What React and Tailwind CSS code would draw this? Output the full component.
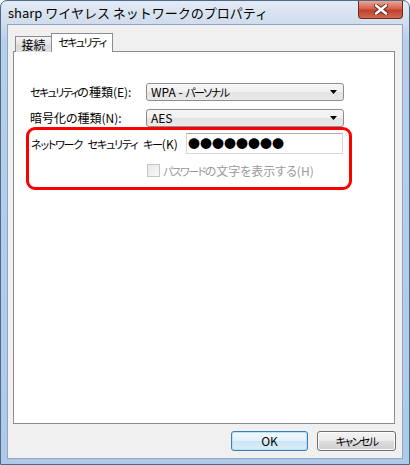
import React from "react";

const jp = "font-['Noto_Sans_CJK_JP','Noto_Sans',sans-serif] [font-feature-settings:'palt'] whitespace-nowrap";

function K({ children }) {
  return <span className="text-[11px] tracking-[-1.6px]">{children}</span>;
}

function K2({ children }) {
  return <span className="text-[11px] tracking-[-1.2px]">{children}</span>;
}

function Arrow() {
  return (
    <svg width="7" height="4" viewBox="0 0 7 4" className="block">
      <path d="M0 0H7L3.5 4Z" fill="#000" />
    </svg>
  );
}

function Combo({ children }) {
  return (
    <div className="w-[198px] h-[18px] flex items-center justify-between pl-[4px] pr-[6px] border border-[#8d8d8d] rounded-[3px] bg-[linear-gradient(#f7f7f7,#f0f0f0_50%,#e3e3e3_51%,#e9e9e9)] text-[12px] text-black leading-none">
      <span>{children}</span>
      <Arrow />
    </div>
  );
}

export default function App() {
  return (
    <div className={`${jp} w-[410px] h-[465px] flex flex-col rounded-t-[7px] border border-[#4d6a8c] bg-[linear-gradient(180deg,#e3ebf5_0px,#cfdcec_24px,#b9cfe8_40px,#aecae8_100%)] overflow-hidden`}>
      {/* title bar */}
      <div className="h-[23px] flex items-start justify-between pl-[7px] pr-[6px]">
        <div className="text-[13px] leading-none pt-[5px] text-black [font-feature-settings:normal]">sharp ワイヤレス ネットワークのプロパティ</div>
        <div className="w-[45px] h-[18px] flex items-center justify-center rounded-b-[4px] border border-t-0 border-[#6a2a22] bg-[linear-gradient(#e9a797,#d4604c_45%,#c0412c_55%,#d26a52)]">
          <svg width="14" height="11" viewBox="0 0 14 11">
            <path d="M2 1.5L12 9.5M12 1.5L2 9.5" stroke="#5a2018" strokeWidth="4.2" strokeLinecap="round" />
            <path d="M2 1.5L12 9.5M12 1.5L2 9.5" stroke="#ffffff" strokeWidth="2.6" strokeLinecap="round" />
          </svg>
        </div>
      </div>
      {/* client */}
      <div className="flex-1 mx-[6px] mb-[5px] flex flex-col border border-[#8fa6c4] bg-[#f0f0f0] pl-[5px] pr-[7px] pt-[8px]">
        {/* tabs */}
        <div className="flex items-end ml-[2px] -mb-px relative z-10 text-[12px] leading-none">
          <div className="w-[37px] h-[16px] flex items-center justify-center border border-b-0 border-[#898c95] bg-[linear-gradient(#f5f5f5,#e4e4e4_50%,#d9d9d9_51%,#e1e1e1)] text-black pt-[1px]">
            接続
          </div>
          <div className="w-[62px] h-[19px] -ml-px flex items-center justify-center border border-b-0 border-[#898c95] bg-white text-black pb-[1px]">
            <K>セキュリティ</K>
          </div>
        </div>
        {/* panel */}
        <div className="flex-1 bg-white border border-[#898c95] pt-[31px] pl-[12px] flex flex-col text-[12px] text-black">
          <div className="flex items-center h-[18px]">
            <div className="w-[116px] ml-[4px] leading-none"><K>セキュリティ</K>の種類(E):</div>
            <Combo>WPA - <K>パーソナル</K></Combo>
          </div>
          <div className="flex items-center h-[18px] mt-[8px]">
            <div className="w-[116px] ml-[4px] leading-none">暗号化の種類(N):</div>
            <Combo>AES</Combo>
          </div>
          <div className="w-[326px] h-[63px] border-[3px] border-[#ff0000] rounded-[9px] flex flex-col">
            <div className="flex items-center mt-[3px] pl-[2px]">
              <div className="w-[155px] leading-none"><K2>ネットワーク</K2><span className="ml-[3px]"> </span><K2>セキュリティ</K2><span className="ml-[3px]"> </span><K2>キー</K2>(K)</div>
              <div className="w-[157px] h-[21px] flex items-center pl-[1px] border border-[#d5d8de] border-t-[#abadb3] bg-white text-[12px] leading-none text-black [font-feature-settings:normal]">
                ●●●●●●●●
              </div>
            </div>
            <div className="flex items-center mt-[10px] pl-[118px]">
              <div className="w-[13px] h-[13px] border border-[#c5c5c5] bg-[linear-gradient(135deg,#e8e8e8,#f8f8f8)]" />
              <div className="ml-[3px] leading-none text-[#9a9a9a]"><K>パスワード</K>の文字を表示する(H)</div>
            </div>
          </div>
        </div>
        {/* buttons */}
        <div className="h-[20px] mt-[7px] mb-[7px] flex justify-end gap-[9px] text-[12px] leading-none text-black">
          <div className="w-[77px] h-[20px] flex items-center justify-center rounded-[3px] border border-[#3c7fb1] bg-[linear-gradient(#f2f9fd,#e3f1fa_50%,#cbe5f5_51%,#d9edf9)] shadow-[inset_0_0_0_1px_#b8e2f8]">
            OK
          </div>
          <div className="w-[79px] -mr-px h-[20px] flex items-center justify-center rounded-[3px] border border-[#707070] bg-[linear-gradient(#f2f2f2,#ebebeb_50%,#dddddd_51%,#cfcfcf)] shadow-[inset_0_0_0_1px_#fbfbfb]">
            <K>キャンセル</K>
          </div>
        </div>
      </div>
    </div>
  );
}
